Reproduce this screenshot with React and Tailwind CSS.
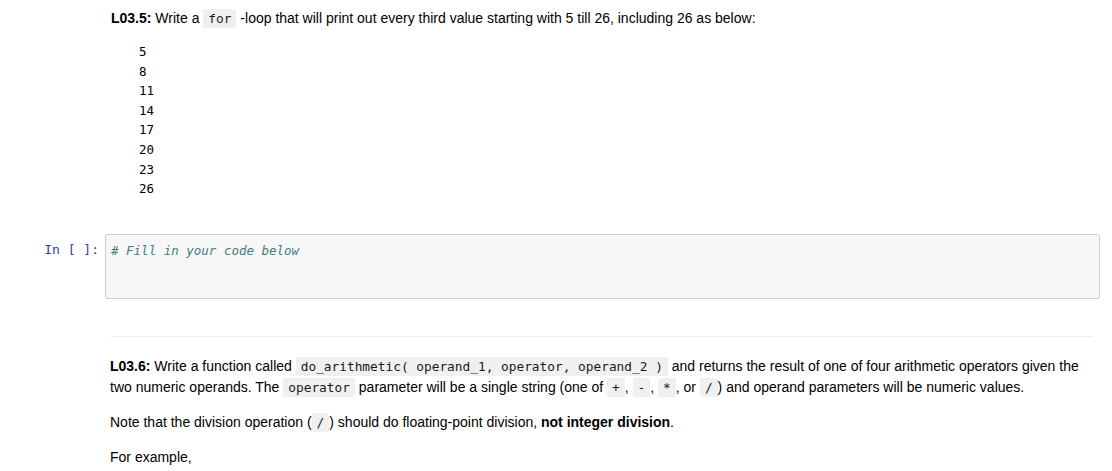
import React from 'react';

const sans = { fontFamily: '"Liberation Sans", Arial, sans-serif' };
const mono = '[font-family:"DejaVu_Sans_Mono","Liberation_Mono",monospace]';

const Code = ({ children }) => (
  <code className={`${mono} bg-[#eff0f1] text-[#1a1a1a] text-[12.8px] px-[5px] py-[2px] rounded-[2px] whitespace-pre`}>
    {children}
  </code>
);

const outputs = [5, 8, 11, 14, 17, 20, 23, 26];

const App = () => {
  return (
    <div className="w-[1112px] h-[471px] bg-white overflow-hidden text-[14px] leading-[20px] text-black" style={sans}>
      {/* markdown cell L03.5 */}
      <div className="pl-[111px] pr-[19px] pt-[8px]">
        <p>
          <b>L03.5:</b> Write a <Code>for</Code> -loop that will print out every third value starting with 5 till 26, including 26 as below:
        </p>
        <pre className={`${mono} text-[12.5px] leading-[19.6px] pl-[28px] mt-[13px]`}>
          {outputs.join('\n')}
        </pre>
      </div>

      {/* code cell */}
      <div className="flex mt-[35px] pr-[12px]">
        <div className={`${mono} w-[105px] pr-[6px] text-right text-[#303f9f] text-[13px] pt-[6px]`}>In [ ]:</div>
        <div className="flex-1 h-[65px] bg-[#f7f7f7] border border-[#cfcfcf] rounded-[2px] px-[5px] pt-[5px]">
          <span className={`${mono} italic text-[#408080] text-[12.5px]`}># Fill in your code below</span>
        </div>
      </div>

      {/* markdown cell L03.6 */}
      <div className="pl-[110px] pr-[19px] mt-[37px]">
        <hr className="border-t border-[#eeeeee]" />
        <p className="mt-[19px] leading-[21px]">
          <b>L03.6:</b> Write a function called <Code>do_arithmetic( operand_1, operator, operand_2 )</Code> and returns the result of one of four arithmetic operators given the two numeric operands. The <Code>operator</Code> parameter will be a single string (one of <Code>+</Code>, <Code>-</Code>, <Code>*</Code>, or <Code>/</Code>) and operand parameters will be numeric values.
        </p>
        <p className="mt-[14px] leading-[21px]">
          Note that the division operation (<Code>/</Code>) should do floating-point division, <b>not integer division</b>.
        </p>
        <p className="mt-[14px] leading-[21px]">For example,</p>
      </div>
    </div>
  );
};

export default App;
